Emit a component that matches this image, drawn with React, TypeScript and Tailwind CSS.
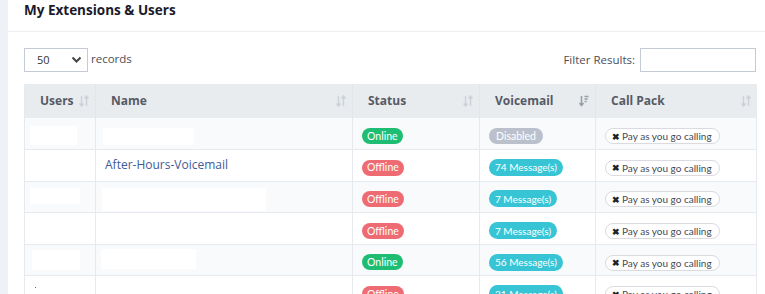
import React from 'react'

type Status = 'Online' | 'Offline'

interface Row {
  user?: [number, number, number, number] // x offset, width, top, height of redaction block
  name?: string
  nameBlock?: [number, number, number, number]
  status: Status
  voicemail: string | null
  dot?: boolean
}

const rows: Row[] = [
  { user: [5, 47, 8, 19], nameBlock: [7, 91, 10, 17], status: 'Online', voicemail: null },
  { name: 'After-Hours-Voicemail', status: 'Offline', voicemail: '74 Message(s)' },
  { user: [5, 50, 6, 16], nameBlock: [6, 164, 6, 23], status: 'Offline', voicemail: '7 Message(s)' },
  { status: 'Offline', voicemail: '7 Message(s)' },
  { user: [7, 48, 5, 20], nameBlock: [5, 95, 4, 20], status: 'Online', voicemail: '56 Message(s)' },
  { status: 'Offline', voicemail: '31 Message(s)', dot: true },
]

const badgeFont = { fontFamily: 'Lato, "Open Sans", sans-serif' }

function SortIcon({ active }: { active?: boolean }) {
  if (active) {
    return (
      <svg width="10" height="12" viewBox="0 0 10 12" className="text-[#9aa0a9]">
        <path d="M2.5 1v9M0.5 8l2 2.5 2-2.5" stroke="currentColor" strokeWidth="1.6" fill="none" />
        <path d="M5.5 1.5h4M5.5 4h3.2M5.5 6.5h2.2" stroke="currentColor" strokeWidth="1.5" fill="none" />
      </svg>
    )
  }
  return (
    <svg width="10" height="12" viewBox="0 0 10 12" className="text-[#cdd2d9]">
      <path d="M2.5 1v9.5M0.5 8.5l2 2.5 2-2.5" stroke="currentColor" strokeWidth="1.5" fill="none" />
      <path d="M7.5 11V1.5M5.5 3.5l2-2.5 2 2.5" stroke="currentColor" strokeWidth="1.5" fill="none" />
    </svg>
  )
}

function Th({ label, width, active }: { label: string; width: number; active?: boolean }) {
  return (
    <th
      style={{ width }}
      className="h-[34px] border-r border-[#e3e6ea] pl-[15px] pr-[6px] text-left align-middle text-[12px] font-bold text-[#555b66] last:border-r-0"
    >
      <div className="flex items-center justify-between">
        <span>{label}</span>
        <SortIcon active={active} />
      </div>
    </th>
  )
}

function Redact({ box }: { box: [number, number, number, number] }) {
  return (
    <div
      className="absolute bg-white"
      style={{ left: box[0], width: box[1], top: box[2], height: box[3] }}
    />
  )
}

export default function App() {
  return (
    <div
      className="flex h-[294px] overflow-hidden bg-[#eef1f5]"
      style={{ fontFamily: '"Open Sans", "Liberation Sans", sans-serif' }}
    >
      <div className="ml-2 flex-1 overflow-hidden bg-white">
        <div className="h-[32px] border-b border-[#eceef1] pl-4 pt-[1px]">
          <h2 className="text-[13.5px] font-bold leading-[18px] text-[#1b1b2b]">My Extensions &amp; Users</h2>
        </div>

        <div className="w-[748px] pl-4">
          <div className="mt-4 flex h-[24px] items-center justify-between">
            <div className="flex items-center">
              <div className="flex h-[24px] w-[64px] items-center justify-between border border-[#c4cbd6] pl-3 pr-[5px] text-[11px] text-[#333]">
                <span>50</span>
                <svg width="11" height="8" viewBox="0 0 11 8">
                  <path d="M1.5 1.5l4 4 4-4" stroke="#444" strokeWidth="2" fill="none" />
                </svg>
              </div>
              <span className="ml-[3px] pb-[2px] text-[11.5px] text-[#4b4e5a]">records</span>
            </div>
            <div className="flex items-center">
              <span className="mr-[5px] text-[11.5px] text-[#4b4e5a]">Filter Results:</span>
              <div className="h-[24px] w-[116px] border border-[#c4cbd6]" />
            </div>
          </div>

          <table className="mt-[12px] w-[732px] table-fixed border-collapse border-l border-[#e6e9ed]">
            <thead className="bg-[#e9ecef]">
              <tr>
                <Th label="Users" width={71} />
                <Th label="Name" width={257} />
                <Th label="Status" width={127} />
                <Th label="Voicemail" width={116} active />
                <Th label="Call Pack" width={161} />
              </tr>
            </thead>
            <tbody>
              {rows.map((r, i) => (
                <tr key={i} className={i % 2 === 0 ? 'bg-[#f9fafc]' : 'bg-white'}>
                  <td className="relative h-[31.6px] border-b border-r border-[#e6e9ed] p-0">
                    {r.user && <Redact box={r.user} />}
                    {r.dot && <div className="absolute left-[10px] top-[11px] h-[1px] w-[1px] bg-[#5a5fa8]" />}
                  </td>
                  <td className="relative border-b border-r border-[#e6e9ed] pl-[9px] text-[12px] text-[#3f5b98]">
                    {r.nameBlock && <Redact box={r.nameBlock} />}
                    {r.name}
                  </td>
                  <td className="border-b border-r border-[#e6e9ed] pl-[9px]">
                    <span
                      style={badgeFont}
                      className={
                        'inline-flex h-[16px] items-center rounded-full px-[5px] text-[10.5px] leading-none text-white ' +
                        (r.status === 'Online' ? 'bg-[#1fbd73]' : 'bg-[#ef6b74]')
                      }
                    >
                      {r.status}
                    </span>
                  </td>
                  <td className="border-b border-r border-[#e6e9ed] pl-[9px]">
                    {r.voicemail ? (
                      <span
                        style={badgeFont}
                        className="inline-flex h-[17px] items-center whitespace-nowrap rounded-full bg-[#37c5d5] px-[6px] text-[10px] leading-none text-white"
                      >
                        {r.voicemail}
                      </span>
                    ) : (
                      <span
                        style={badgeFont}
                        className="inline-flex h-[16px] items-center rounded-full bg-[#bac1cd] px-[7px] text-[10.5px] leading-none text-white"
                      >
                        Disabled
                      </span>
                    )}
                  </td>
                  <td className="border-b border-r border-[#e6e9ed] pl-[9px]">
                    <span
                      style={badgeFont}
                      className="inline-flex h-[16px] items-center whitespace-nowrap rounded-full border border-[#d9dbe0] bg-white pl-[6px] pr-[7px] text-[10px] leading-none text-[#444a55]"
                    >
                      <span className="mr-[2px] text-[9px] font-bold text-[#222]">✖</span>
                      Pay as you go calling
                    </span>
                  </td>
                </tr>
              ))}
            </tbody>
          </table>
        </div>
      </div>
    </div>
  )
}
